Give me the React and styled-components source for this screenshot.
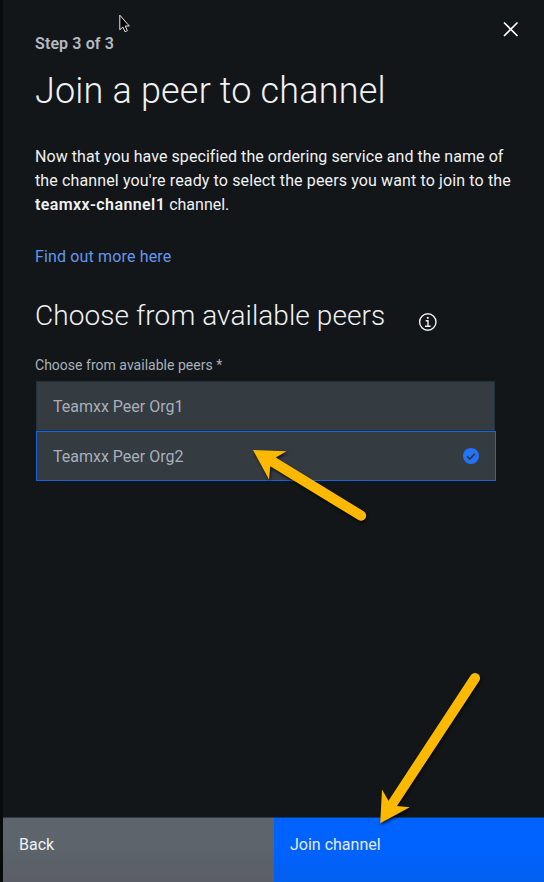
import React from 'react';
import styled, { createGlobalStyle } from 'styled-components';

const GlobalStyle = createGlobalStyle`
  *, *::before, *::after { box-sizing: border-box; }
  body { margin: 0; background: #121619; }
`;

const Page = styled.main`
  position: relative;
  width: 544px;
  height: 882px;
  display: flex;
  flex-direction: column;
  overflow: hidden;
  border-left: 3px solid #080b0c;
  background: #121619;
  color: #f0f1f3;
  font-family: Roboto, "Noto Sans", sans-serif;
  font-size: 16px;
`;

const Content = styled.section`
  flex: 1;
  padding: 19px 22px 0 32px;
`;

const Header = styled.header`
  display: flex;
  justify-content: space-between;
  align-items: flex-start;
`;

const Step = styled.p`
  margin: 13px 0 0;
  line-height: 24px;
  font-weight: 600;
  letter-spacing: 0.12px;
  color: #b4bac4;
`;

const CloseButton = styled.button`
  display: flex;
  width: 22px;
  height: 22px;
  padding: 0;
  border: 0;
  background: none;
  color: #fff;
`;

const Title = styled.h1`
  margin: 11px 0 0;
  font-size: 36px;
  line-height: 48px;
  font-weight: 300;
  letter-spacing: 0.17px;
  white-space: nowrap;
`;

const Description = styled.p`
  margin: 30px 0 0;
  line-height: 24px;
`;

const Line = styled.span`
  display: block;
  white-space: nowrap;
  letter-spacing: ${({ $tracking }) => $tracking || 0}px;
`;

const ChannelName = styled.strong`
  font-weight: 600;
  letter-spacing: 0.4px;
`;

const MoreLink = styled.a`
  display: block;
  margin-top: 28px;
  line-height: 24px;
  letter-spacing: 0.15px;
  color: #6496ee;
  text-decoration: none;
`;

const SectionHeader = styled.div`
  display: flex;
  align-items: center;
  gap: 33px;
  margin-top: 29px;
`;

const SectionTitle = styled.h2`
  margin: 0;
  font-size: 28px;
  line-height: 36px;
  font-weight: 300;
  letter-spacing: 0.08px;
  white-space: nowrap;
`;

const InfoIcon = styled.svg`
  width: 20px;
  height: 20px;
  margin-top: 12px;
`;

const Label = styled.p`
  margin: 22px 0 0;
  font-size: 14px;
  line-height: 18px;
  letter-spacing: 0.02px;
  color: #a9b0ba;
`;

const PeerList = styled.ul`
  width: 460px;
  margin: 7px 0 0 1px;
  padding: 0;
  list-style: none;
`;

const Peer = styled.li`
  display: flex;
  align-items: center;
  justify-content: space-between;
  width: ${({ $selected }) => ($selected ? 460 : 459)}px;
  height: 50px;
  padding: 0 16px;
  border: 1px solid ${({ $selected }) => ($selected ? '#1b63dc' : '#24333b')};
  background: #343b41;
  color: #a8afb9;
`;

const Footer = styled.footer`
  display: grid;
  grid-template-columns: 271px 1fr;
  height: 65px;
`;

const FooterButton = styled.button`
  display: flex;
  align-items: flex-start;
  padding: 16px 16px;
  border: 0;
  border-top: 1px solid ${({ $primary }) => ($primary ? '#0c3a7e' : '#343a3f')};
  background: ${({ $primary }) =>
    $primary
      ? 'linear-gradient(#0062ff 50%, #035fee)'
      : 'linear-gradient(#5d646b 40%, #5b5e66)'};
  color: ${({ $primary }) => ($primary ? '#e3edff' : '#f0f1f3')};
  font: inherit;
  line-height: 22px;
`;

const Overlay = styled.svg`
  position: absolute;
  top: 0;
  left: -3px;
  width: 544px;
  height: 882px;
  pointer-events: none;
`;

const Arrow = styled.path`
  fill: #fdb900;
  filter: drop-shadow(1px 2px 1.5px rgba(0, 0, 0, 0.65));
`;

function CheckIcon() {
  return (
    <svg width="16" height="16" viewBox="0 0 16 16">
      <circle cx="8" cy="8" r="8" fill="#2372fa" />
      <path d="M4 8.3 6.8 11 12 5.6" fill="none" stroke="#343b41" strokeWidth="1.8" />
    </svg>
  );
}

export default function App() {
  return (
    <>
      <GlobalStyle />
      <Page>
        <Content>
          <Header>
            <Step>Step 3 of 3</Step>
            <CloseButton aria-label="Close">
              <svg width="22" height="22" viewBox="0 0 22 22">
                <path d="M4 3.5 17.5 17M17.5 3.5 4 17" stroke="currentColor" strokeWidth="1.6" />
              </svg>
            </CloseButton>
          </Header>
          <Title>Join a peer to channel</Title>
          <Description>
            <Line $tracking={0.065}>Now that you have specified the ordering service and the name of</Line>
            <Line $tracking={0.13}>the channel you're ready to select the peers you want to join to the</Line>
            <Line><ChannelName>teamxx-channel1</ChannelName> channel.</Line>
          </Description>
          <MoreLink>Find out more here</MoreLink>
          <SectionHeader>
            <SectionTitle>Choose from available peers</SectionTitle>
            <InfoIcon viewBox="0 0 20 20" fill="none" stroke="#f0f1f3">
              <circle cx="9.8" cy="10" r="8.2" strokeWidth="1.4" />
              <path d="M7.7 8.7H10V14M7 14.2H12.6" strokeWidth="1.4" />
              <circle cx="9.8" cy="5.8" r="1.1" fill="#f0f1f3" stroke="none" />
            </InfoIcon>
          </SectionHeader>
          <Label>Choose from available peers *</Label>
          <PeerList>
            <Peer>Teamxx Peer Org1</Peer>
            <Peer $selected>
              Teamxx Peer Org2
              <CheckIcon />
            </Peer>
          </PeerList>
        </Content>
        <Footer>
          <FooterButton>Back</FooterButton>
          <FooterButton $primary>Join channel</FooterButton>
        </Footer>
        <Overlay viewBox="0 0 544 882">
          <path
            d="M119.8 15.2V29.8L122.9 27 125 31.7 127.3 30.7 125.3 26H129.3Z"
            fill="#000"
            stroke="#e8e8e8"
            strokeWidth="1"
          />
          <Arrow d="M253 450 286.5 451.2 275.8 457.5 363.6 511.3A5 5 0 0 1 358.5 520.1L270.3 466.3 269 479.5Z" />
          <Arrow d="M380.2 823.3 382 789.6 388.5 800.7 470.6 675.4A5.1 5.1 0 0 1 479.2 680.9L397 806 409.8 807.3Z" />
        </Overlay>
      </Page>
    </>
  );
}
